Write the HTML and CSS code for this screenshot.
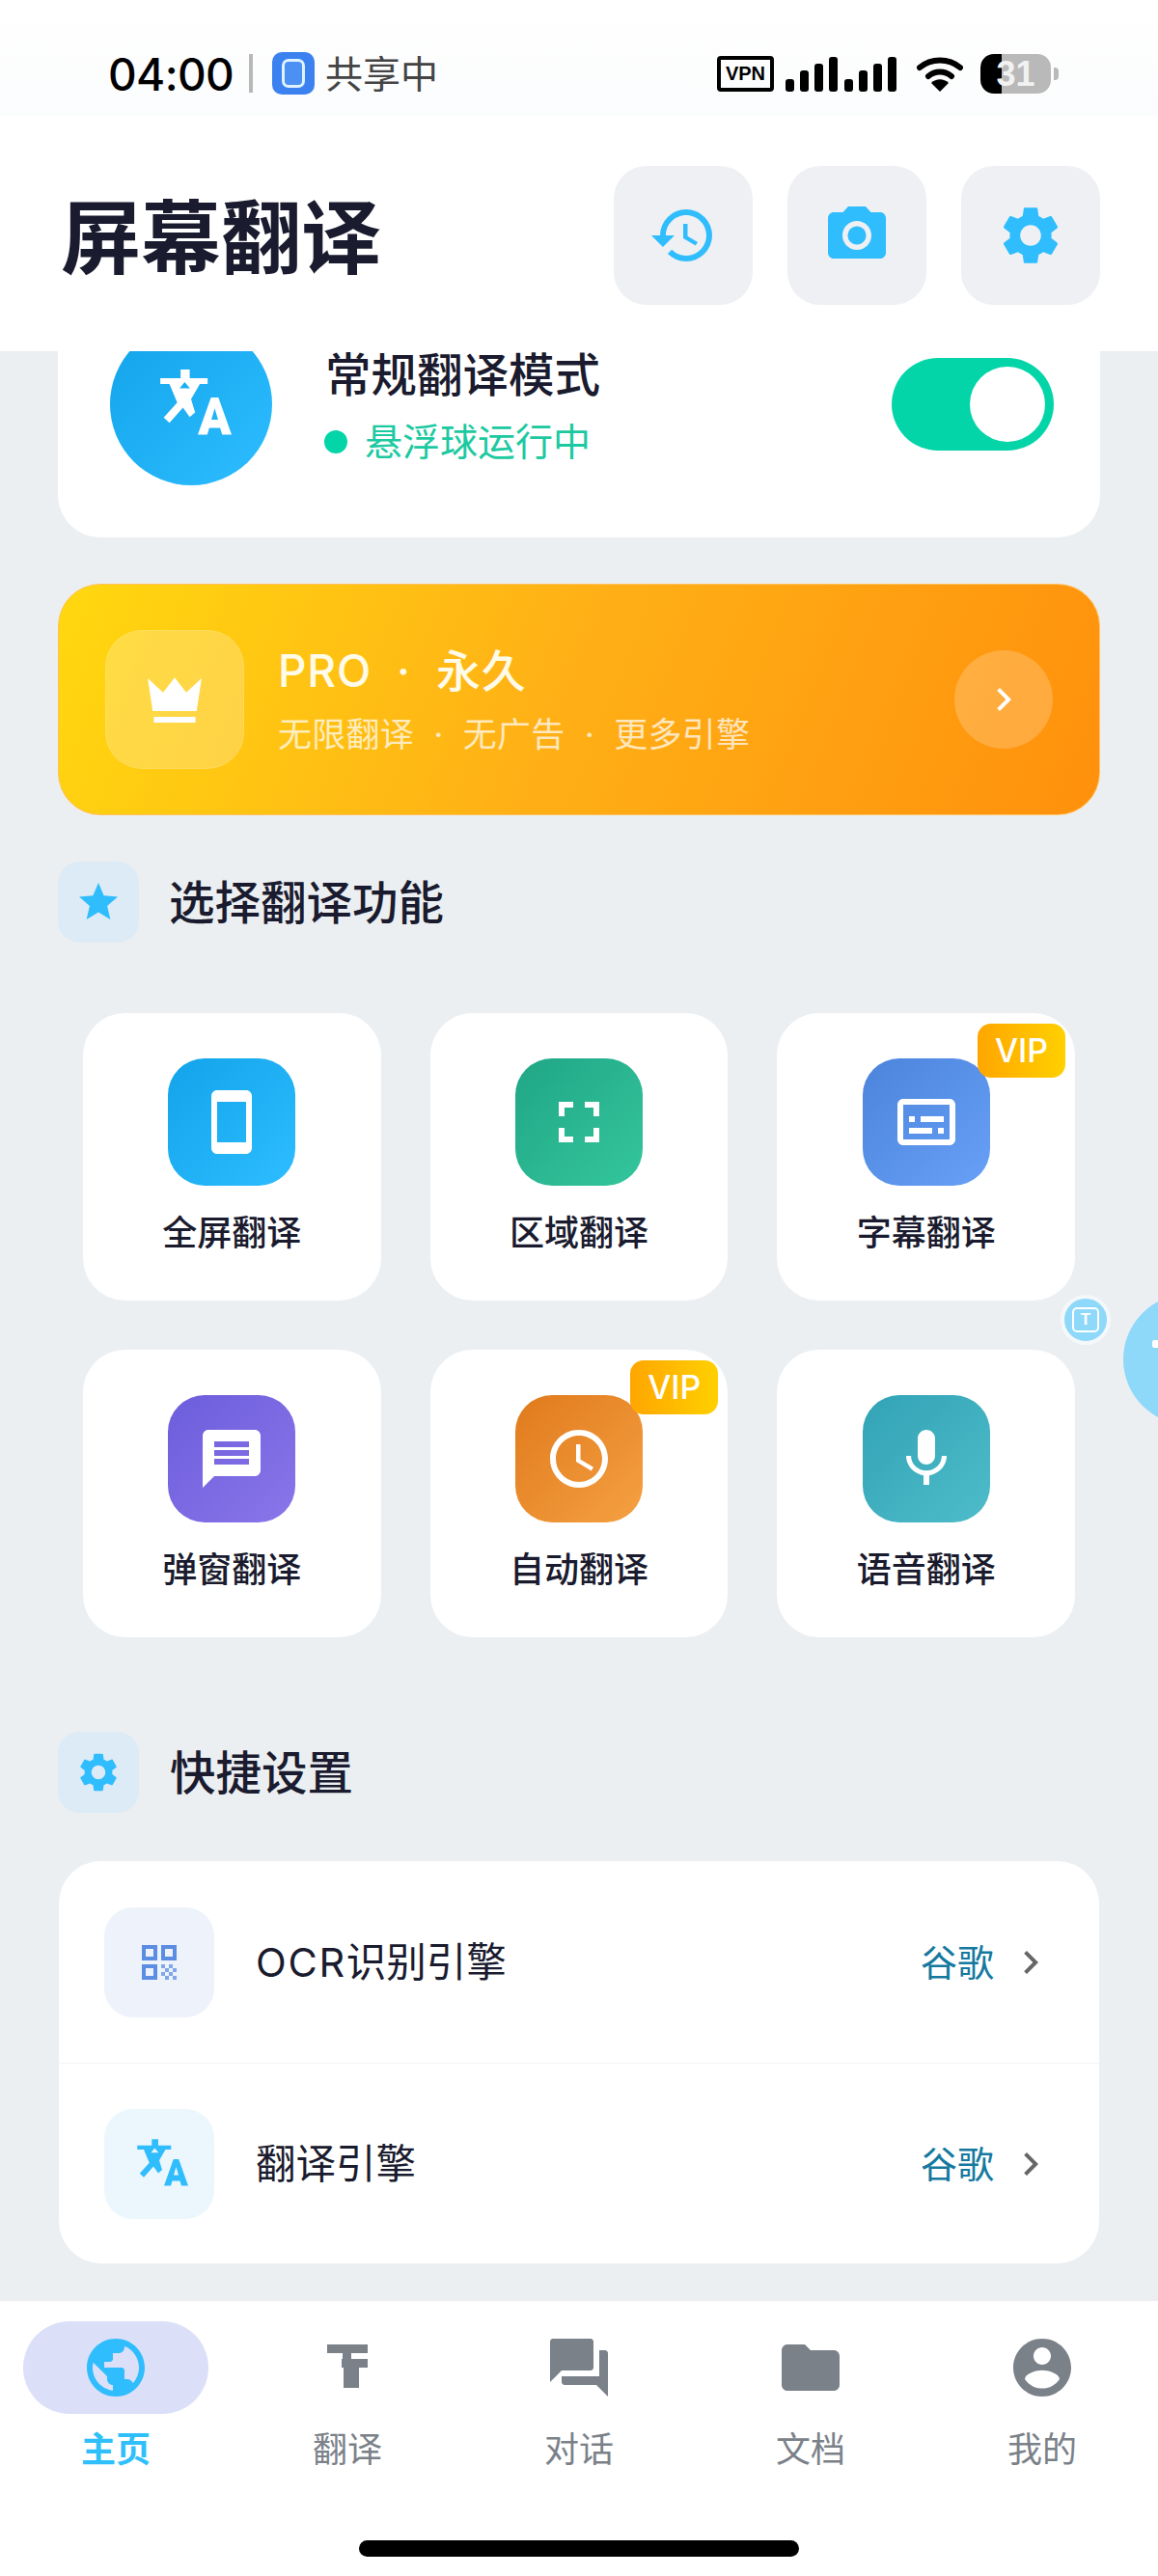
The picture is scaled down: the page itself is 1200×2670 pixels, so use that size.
FILE: index.html
```html
<!DOCTYPE html>
<html lang="zh-CN">
<head>
  <meta charset="UTF-8" />
  <meta name="viewport" content="width=device-width, initial-scale=1.0"/>
  <title>屏幕翻译</title>
  <link rel="stylesheet" href="styles.css">
</head>
<body>

  <!-- shared icons -->
  <svg class="sprite" aria-hidden="true">
    <symbol id="i-gear" viewBox="0 0 24 24">
      <path d="M19.14 12.94c.04-.3.06-.61.06-.94 0-.32-.02-.64-.07-.94l2.03-1.58c.18-.14.23-.41.12-.61l-1.92-3.32c-.12-.22-.37-.29-.59-.22l-2.39.96c-.5-.38-1.03-.7-1.62-.94l-.36-2.54c-.04-.24-.24-.41-.48-.41h-3.84c-.24 0-.43.17-.47.41l-.36 2.54c-.59.24-1.13.57-1.62.94l-2.39-.96c-.22-.08-.47 0-.59.22L2.74 8.87c-.12.21-.08.47.12.61l2.03 1.58c-.05.3-.09.63-.09.94s.02.64.07.94l-2.03 1.58c-.18.14-.23.41-.12.61l1.92 3.32c.12.22.37.29.59.22l2.39-.96c.5.38 1.03.7 1.62.94l.36 2.54c.05.24.24.41.48.41h3.84c.24 0 .44-.17.47-.41l.36-2.54c.59-.24 1.13-.56 1.62-.94l2.39.96c.22.08.47 0 .59-.22l1.92-3.32c.12-.22.07-.47-.12-.61l-2.01-1.58zM12 15.6c-1.98 0-3.6-1.62-3.6-3.6s1.62-3.6 3.6-3.6 3.6 1.62 3.6 3.6-1.62 3.6-3.6 3.6z"/>
    </symbol>
    <symbol id="i-translate" viewBox="0 0 24 24">
      <path fill-rule="evenodd" d="M8.9 1.7h2.7v2.6h5.3V6h-2.3L12 10.5l1.2 3.9-1.6 1.4-2-2.8-4 4.5-1.7-1.6 4-4.4L5.6 6H2.9V4.3h6zM10.1 5.4L8.6 7.3h3.1z"/>
      <path fill-rule="evenodd" d="M17.9 10h2.2L24 21h-2.8l-.6-2h-3.2l-.6 2H14zM19 13.2l-1 3.4h2z"/>
    </symbol>
    <symbol id="i-chevron" viewBox="0 0 24 24">
      <path d="M10 6L8.59 7.41 13.17 12l-4.58 4.59L10 18l6-6z"/>
    </symbol>
  </svg>

  <div class="phone">

    <div class="status">
      <span class="time">04:00</span>
      <span class="sep"></span>
      <span class="share-icon"><i></i></span>
      <span class="share-text">共享中</span>
      <span class="status-right">
        <span class="vpn">VPN</span>
        <svg class="signal" viewBox="0 0 115 36">
          <rect x="0" y="23" width="9" height="13" rx="3"/>
          <rect x="15" y="14" width="9" height="22" rx="3"/>
          <rect x="30" y="7" width="9" height="29" rx="3"/>
          <rect x="45" y="0" width="9" height="36" rx="3"/>
          <rect x="61" y="23" width="9" height="13" rx="3"/>
          <rect x="76" y="14" width="9" height="22" rx="3"/>
          <rect x="91" y="7" width="9" height="29" rx="3"/>
          <rect x="106" y="0" width="9" height="36" rx="3"/>
        </svg>
        <svg class="wifi" viewBox="0 0 48 36">
          <path class="wifi-arc" d="M3 11C15 1 33 1 45 11"/>
          <path class="wifi-arc" d="M12 20C19 14 29 14 36 20"/>
          <path d="M15 27C20 22 28 22 33 27L24 36z"/>
        </svg>
        <span class="battery">31</span>
        <span class="battery-nub"></span>
      </span>
    </div>

    <header class="top">
      <h1>屏幕翻译</h1>
      <div class="top-btns">
        <button class="top-btn">
          <svg viewBox="0 0 24 24"><path d="M13 3a9 9 0 0 0-9 9H1l3.89 3.89.07.14L9 12H6c0-3.87 3.13-7 7-7s7 3.13 7 7-3.13 7-7 7c-1.93 0-3.68-.79-4.94-2.06l-1.42 1.42A8.954 8.954 0 0 0 13 21a9 9 0 0 0 0-18zm-1 5v5l4.28 2.54.72-1.21-3.5-2.08V8H12z"/></svg>
        </button>
        <button class="top-btn">
          <svg viewBox="0 0 24 24"><circle cx="12" cy="12" r="3.2"/><path d="M9 2 7.17 4H4c-1.1 0-2 .9-2 2v12c0 1.1.9 2 2 2h16c1.1 0 2-.9 2-2V6c0-1.1-.9-2-2-2h-3.17L15 2H9zm3 15c-2.76 0-5-2.24-5-5s2.24-5 5-5 5 2.24 5 5-2.24 5-5 5z"/></svg>
        </button>
        <button class="top-btn">
          <svg viewBox="0 0 24 24"><use href="#i-gear"/></svg>
        </button>
      </div>
    </header>

    <main>
      <!-- list is scrolled a little, the header covers the top of this card -->
      <section class="mode-card">
        <div class="mode-icon"><svg viewBox="0 0 24 24"><use href="#i-translate"/></svg></div>
        <div class="mode-text">
          <div class="mode-title">常规翻译模式</div>
          <div class="mode-sub"><span class="dot"></span>悬浮球运行中</div>
        </div>
        <div class="toggle"><span class="knob"></span></div>
      </section>

      <section class="pro-card">
        <div class="crown">
          <svg viewBox="0 0 24 24"><path d="M2.7 4.7L8 9.6l4-5.2 4 5.2 5.3-4.9L19.6 16H4.4z"/><rect x="4.8" y="18" width="14.4" height="2"/></svg>
        </div>
        <div class="pro-text">
          <div class="pro-title">PRO &nbsp;·&nbsp; 永久</div>
          <div class="pro-sub">无限翻译 &nbsp;·&nbsp; 无广告 &nbsp;·&nbsp; 更多引擎</div>
        </div>
        <div class="pro-arrow"><svg viewBox="0 0 24 24"><use href="#i-chevron"/></svg></div>
      </section>

      <div class="sec-head">
        <span class="sec-icon"><svg viewBox="0 0 24 24"><path d="M12 17.27L18.18 21l-1.64-7.03L22 9.24l-7.19-.61L12 2 9.19 8.63 2 9.24l5.46 4.73L5.82 21z"/></svg></span>
        <h2>选择翻译功能</h2>
      </div>

      <div class="grid">
        <div class="tile">
          <div class="tile-icon c-blue"><svg viewBox="0 0 24 24"><path d="M17 1.01L7 1c-1.1 0-2 .9-2 2v18c0 1.1.9 2 2 2h10c1.1 0 2-.9 2-2V3c0-1.1-.9-1.99-2-1.99zM17 19H7V5h10v14z"/></svg></div>
          <div class="tile-name">全屏翻译</div>
        </div>
        <div class="tile">
          <div class="tile-icon c-green"><svg viewBox="0 0 24 24"><path d="M7 14H5v5h5v-2H7v-3zm-2-4h2V7h3V5H5v5zm12 7h-3v2h5v-5h-2v3zM14 5v2h3v3h2V5h-5z"/></svg></div>
          <div class="tile-name">区域翻译</div>
        </div>
        <div class="tile">
          <span class="vip">VIP</span>
          <div class="tile-icon c-azure"><svg viewBox="0 0 24 24"><path d="M20 4H4c-1.1 0-2 .9-2 2v12c0 1.1.9 2 2 2h16c1.1 0 2-.9 2-2V6c0-1.1-.9-2-2-2zm0 14H4V6h16v12zM6 10h2v2H6zm0 4h8v2H6zm10 0h2v2h-2zm-6-4h8v2h-8z"/></svg></div>
          <div class="tile-name">字幕翻译</div>
        </div>
        <div class="tile">
          <div class="tile-icon c-purple"><svg viewBox="0 0 24 24"><path d="M20 2H4c-1.1 0-1.99.9-1.99 2L2 22l4-4h14c1.1 0 2-.9 2-2V4c0-1.1-.9-2-2-2zm-2 12H6v-2h12v2zm0-3H6V9h12v2zm0-3H6V6h12v2z"/></svg></div>
          <div class="tile-name">弹窗翻译</div>
        </div>
        <div class="tile">
          <span class="vip">VIP</span>
          <div class="tile-icon c-orange"><svg viewBox="0 0 24 24"><path d="M11.99 2C6.47 2 2 6.48 2 12s4.47 10 9.99 10C17.52 22 22 17.52 22 12S17.52 2 11.99 2zM12 20c-4.42 0-8-3.58-8-8s3.58-8 8-8 8 3.58 8 8-3.58 8-8 8zm.5-13H11v6l5.25 3.15.75-1.23-4.5-2.67z"/></svg></div>
          <div class="tile-name">自动翻译</div>
        </div>
        <div class="tile">
          <div class="tile-icon c-teal"><svg viewBox="0 0 24 24"><path d="M12 14c1.66 0 2.99-1.34 2.99-3L15 5c0-1.66-1.34-3-3-3S9 3.34 9 5v6c0 1.66 1.34 3 3 3zm5.3-3c0 3-2.54 5.1-5.3 5.1S6.7 14 6.7 11H5c0 3.41 2.72 6.23 6 6.72V21h2v-3.28c3.28-.48 6-3.3 6-6.72h-1.7z"/></svg></div>
          <div class="tile-name">语音翻译</div>
        </div>
      </div>

      <div class="sec-head sec-head-2">
        <span class="sec-icon"><svg viewBox="0 0 24 24"><use href="#i-gear"/></svg></span>
        <h2>快捷设置</h2>
      </div>

      <section class="settings">
        <div class="row">
          <span class="row-icon row-icon-qr">
            <svg viewBox="0 0 24 24">
              <path d="M3 11h8V3H3v8zm2-6h4v4H5V5zM3 21h8v-8H3v8zm2-6h4v4H5v-4zM13 3v8h8V3h-8zm6 6h-4V5h4v4z"/>
              <path class="qr-dots" d="M13 13h2v2h-2zm4 0h2v2h-2zm-2 2h2v2h-2zm4 0h2v2h-2zm-6 2h2v2h-2zm4 0h2v2h-2zm-2 2h2v2h-2zm4 0h2v2h-2z"/>
            </svg>
          </span>
          <span class="row-name"><span class="ocr">OCR</span>识别引擎</span>
          <span class="row-value">谷歌</span>
          <svg class="row-chev" viewBox="0 0 24 24"><use href="#i-chevron"/></svg>
        </div>
        <div class="row">
          <span class="row-icon row-icon-tr"><svg viewBox="0 0 24 24"><use href="#i-translate"/></svg></span>
          <span class="row-name">翻译引擎</span>
          <span class="row-value">谷歌</span>
          <svg class="row-chev" viewBox="0 0 24 24"><use href="#i-chevron"/></svg>
        </div>
      </section>
    </main>

    <nav>
      <div class="tabs">
        <div class="tab active">
          <div class="tab-icon"><svg viewBox="0 0 24 24"><path d="M12 2C6.48 2 2 6.48 2 12s4.48 10 10 10 10-4.48 10-10S17.52 2 12 2zm-1 17.93c-3.95-.49-7-3.85-7-7.93 0-.62.08-1.21.21-1.79L9 15v1c0 1.1.9 2 2 2v1.93zm6.9-2.54c-.26-.81-1-1.39-1.9-1.39h-1v-3c0-.55-.45-1-1-1H8v-2h2c.55 0 1-.45 1-1V7h2c1.1 0 2-.9 2-2v-.41c2.93 1.19 5 4.06 5 7.41 0 2.08-.8 3.97-2.1 5.39z"/></svg></div>
          <div class="tab-name">主页</div>
        </div>
        <div class="tab">
          <div class="tab-icon"><svg viewBox="0 0 72 72"><path d="M15 12h42v9H15zM31 21h9v6h-9zM30 27h27v9H48v21H32V36h-2z"/></svg></div>
          <div class="tab-name">翻译</div>
        </div>
        <div class="tab">
          <div class="tab-icon"><svg viewBox="0 0 24 24"><path d="M21 6h-2v9H6v2c0 .55.45 1 1 1h11l4 4V7c0-.55-.45-1-1-1zm-4 6V3c0-.55-.45-1-1-1H3c-.55 0-1 .45-1 1v14l4-4h10c.55 0 1-.45 1-1z"/></svg></div>
          <div class="tab-name">对话</div>
        </div>
        <div class="tab">
          <div class="tab-icon"><svg viewBox="0 0 24 24"><path d="M10 4H4c-1.1 0-1.99.9-1.99 2L2 18c0 1.1.9 2 2 2h16c1.1 0 2-.9 2-2V8c0-1.1-.9-2-2-2h-8l-2-2z"/></svg></div>
          <div class="tab-name">文档</div>
        </div>
        <div class="tab">
          <div class="tab-icon"><svg viewBox="0 0 24 24"><path d="M12 2C6.48 2 2 6.48 2 12s4.48 10 10 10 10-4.48 10-10S17.52 2 12 2zm0 3c1.66 0 3 1.34 3 3s-1.34 3-3 3-3-1.34-3-3 1.34-3 3-3zm0 14.2c-2.5 0-4.71-1.28-6-3.22.03-1.99 4-3.08 6-3.08 1.99 0 5.97 1.09 6 3.08-1.29 1.94-3.5 3.22-6 3.22z"/></svg></div>
          <div class="tab-name">我的</div>
        </div>
      </div>
      <div class="home-bar"></div>
    </nav>

    <!-- floating ball over the page -->
    <div class="float-t"><span>T</span></div>
    <div class="float-ball"><i></i></div>
  </div>

</body>
</html>
```

FILE: styles.css
```css
* {
  box-sizing: border-box;
}

html, body {
  margin: 0;
  background: #eceff2;
}

body {
  font-family: Inter, "Noto Sans CJK SC", sans-serif;
  color: #1a1b2e;
}

.sprite {
  display: none;
}

.phone {
  position: relative;
  width: 1200px;
  height: 2670px;
  display: flex;
  flex-direction: column;
  overflow: hidden;
}

/* status bar */
.status {
  height: 120px;
  flex: none;
  display: flex;
  align-items: flex-start;
  padding: 54px 0 0 112px;
  background: linear-gradient(to bottom, #fff 0, #fbfcfd 100%);
}

.time {
  margin-top: 1px;
  font-size: 46px;
  line-height: 44px;
  font-weight: 500;
  color: #000;
  width: 146px;
  letter-spacing: -0.6px;
}

.sep {
  width: 4px;
  height: 40px;
  margin-top: 2px;
  background: #b8b8b8;
}

.share-icon {
  width: 44px;
  height: 44px;
  margin-left: 20px;
  border-radius: 10px;
  background: #3b82f0;
  display: flex;
  align-items: center;
  justify-content: center;
}

.share-icon i {
  width: 24px;
  height: 30px;
  border: 3px solid #dff3ff;
  border-radius: 7px;
  background: #4d90f3;
}

.share-text {
  margin: 1px 0 0 11px;
  font-size: 39px;
  line-height: 44px;
  color: #444;
}

.status-right {
  margin-left: auto;
  display: flex;
  align-items: flex-start;
  padding-right: 103px;
}

.vpn {
  width: 59px;
  height: 37px;
  margin-top: 4px;
  border: 4px solid #000;
  border-radius: 4px;
  font: bold 20px/29px "Liberation Sans", sans-serif;
  text-align: center;
  color: #000;
}

.signal {
  width: 115px;
  height: 36px;
  margin: 5px 0 0 12px;
}

.wifi {
  width: 48px;
  height: 36px;
  margin: 5px 0 0 21px;
}

.wifi-arc {
  fill: none;
  stroke: #000;
  stroke-width: 6;
  stroke-linecap: round;
}

.battery {
  width: 73px;
  height: 41px;
  margin: 2px 0 0 18px;
  border-radius: 14px;
  background: linear-gradient(to right, #000 30%, #b9b9b9 30%);
  font: bold 36px/41px "Liberation Sans", sans-serif;
  color: #f2f2f2;
  text-align: center;
}

.battery-nub {
  width: 5px;
  height: 13px;
  margin: 16px 0 0 3px;
  border-radius: 0 4px 4px 0;
  background: #b9b9b9;
}

/* title bar */
.top {
  height: 244px;
  flex: none;
  position: relative;
  z-index: 2;
  display: flex;
  align-items: flex-start;
  justify-content: space-between;
  padding: 52px 60px 0 63px;
  background: #fff;
}

h1 {
  margin: 0;
  padding-top: 27px;
  font-size: 83px;
  line-height: 96px;
  font-weight: 700;
}

.top-btns {
  display: flex;
  gap: 36px;
}

.top-btn {
  width: 144px;
  height: 144px;
  padding: 0;
  border: 0;
  border-radius: 34px;
  background: #eef0f3;
  display: flex;
  align-items: center;
  justify-content: center;
}

.top-btn svg {
  width: 72px;
  height: 72px;
  fill: #2fbdfd;
}

/* scrolled content */
main {
  flex: 1;
  min-height: 0;
  padding: 0 60px;
  background: #eceff2;
}

.mode-card {
  margin-top: -77px;
  height: 270px;
  display: flex;
  align-items: flex-start;
  padding: 48px 48px 0 54px;
  border-radius: 44px;
  background: #fff;
}

.mode-icon {
  width: 168px;
  height: 168px;
  flex: none;
  border-radius: 50%;
  background: linear-gradient(135deg, #12a3ea, #2dbdff);
  display: flex;
  align-items: center;
  justify-content: center;
}

.mode-icon svg {
  width: 84px;
  height: 84px;
  fill: #fff;
}

.mode-text {
  margin-left: 54px;
  flex: 1;
  padding-top: 30px;
}

.mode-title {
  margin-left: 1px;
  font-size: 47.5px;
  line-height: 48px;
  font-weight: 500;
}

.mode-sub {
  margin-top: 25px;
  display: flex;
  align-items: center;
  font-size: 39px;
  line-height: 40px;
  color: #1cc9a0;
}

.dot {
  width: 24px;
  height: 24px;
  margin-right: 18px;
  border-radius: 50%;
  background: #03d5a9;
}

.toggle {
  width: 168px;
  height: 96px;
  margin-top: 36px;
  padding: 9px;
  border-radius: 48px;
  background: #03d5a9;
  display: flex;
  justify-content: flex-end;
}

.knob {
  width: 78px;
  height: 78px;
  border-radius: 50%;
  background: #fff;
}

.pro-card {
  margin-top: 48px;
  height: 240px;
  display: flex;
  align-items: center;
  padding: 0 48px;
  border: 1px solid #ffc25e;
  border-radius: 44px;
  background: linear-gradient(112deg, #ffd80f 0%, #ffb016 48%, #ff900c 100%);
  color: #fff;
}

.crown {
  width: 144px;
  height: 144px;
  flex: none;
  border: 1px solid rgba(255, 255, 255, 0.12);
  border-radius: 38px;
  background: rgba(255, 255, 255, 0.22);
  display: flex;
  align-items: center;
  justify-content: center;
}

.crown svg {
  width: 72px;
  height: 72px;
  fill: #fff;
}

.pro-text {
  margin-left: 35px;
  flex: 1;
}

.pro-title {
  font-size: 46px;
  line-height: 56px;
  font-weight: 500;
  letter-spacing: 0.8px;
  color: #fffbe8;
}

.pro-sub {
  margin-top: 16px;
  font-size: 35px;
  line-height: 44px;
  letter-spacing: 0.25px;
  color: rgba(255, 255, 255, 0.72);
}

.pro-arrow {
  width: 102px;
  height: 102px;
  border-radius: 50%;
  background: rgba(255, 255, 255, 0.2);
  display: flex;
  align-items: center;
  justify-content: center;
}

.pro-arrow svg {
  width: 48px;
  height: 48px;
  fill: #fff;
}

/* section headings */
.sec-head {
  margin-top: 48px;
  display: flex;
  align-items: center;
  gap: 31px;
}

.sec-head-2 {
  margin-top: 98px;
  gap: 32px;
}

.sec-icon {
  width: 84px;
  height: 84px;
  border-radius: 22px;
  background: #dcebf5;
  display: flex;
  align-items: center;
  justify-content: center;
}

.sec-icon svg {
  width: 48px;
  height: 48px;
  fill: #2fbdfd;
}

h2 {
  margin: 2px 0 0;
  font-size: 47.5px;
  line-height: 60px;
  font-weight: 500;
}

/* feature tiles */
.grid {
  margin-top: 73px;
  padding: 0 26px;
  display: grid;
  grid-template-columns: repeat(3, 1fr);
  gap: 51px;
}

.tile {
  position: relative;
  height: 298px;
  padding-top: 47px;
  border-radius: 44px;
  background: #fff;
  display: flex;
  flex-direction: column;
  align-items: center;
}

.tile-icon {
  width: 132px;
  height: 132px;
  border-radius: 38px;
  display: flex;
  align-items: center;
  justify-content: center;
}

.tile-icon svg {
  width: 72px;
  height: 72px;
  fill: #fff;
}

.c-blue   { background: linear-gradient(135deg, #12a3ea, #2dbdff); }
.c-green  { background: linear-gradient(135deg, #20a686, #34c69c); }
.c-azure  { background: linear-gradient(135deg, #4c84dc, #67a0f6); }
.c-purple { background: linear-gradient(135deg, #6c5ddb, #8a76ea); }
.c-orange { background: linear-gradient(135deg, #e07a1c, #f5a143); }
.c-teal   { background: linear-gradient(135deg, #32a3b6, #4ebcc9); }

.tile-name {
  margin-top: 27px;
  font-size: 36px;
  line-height: 44px;
  font-weight: 500;
}

.vip {
  position: absolute;
  top: 11px;
  right: 10px;
  width: 91px;
  height: 56px;
  border-radius: 14px;
  background: linear-gradient(to right, #ffa600, #ffd000);
  font-size: 34px;
  line-height: 56px;
  font-weight: 500;
  text-align: center;
  color: #fff;
}

/* quick settings */
.settings {
  margin: 50px 1px 0;
  border-radius: 44px;
  background: #fff;
}

.row {
  height: 209px;
  display: flex;
  align-items: center;
  padding: 0 47px;
}

.row + .row {
  height: 208px;
  border-top: 1px solid #f3f4f6;
}

.row-icon {
  width: 114px;
  height: 114px;
  border-radius: 30px;
  display: flex;
  align-items: center;
  justify-content: center;
}

.row-icon svg {
  width: 48px;
  height: 48px;
}

.row-icon-qr {
  background: #eef2fb;
  fill: #5b8de2;
}

.qr-dots {
  opacity: 0.75;
}

.row-icon-tr {
  background: #ecf7fd;
  fill: #2fbdfd;
}

.row-icon-tr svg {
  width: 60px;
  height: 60px;
}

.row-name {
  margin-left: 43px;
  flex: 1;
  font-size: 41.5px;
  line-height: 56px;
}

.ocr {
  letter-spacing: 1.7px;
}

.row-value {
  font-size: 38px;
  line-height: 50px;
  color: #15799f;
}

.row-chev {
  width: 48px;
  height: 48px;
  margin-left: 14px;
  fill: #666;
}

/* bottom tabs */
nav {
  height: 285px;
  flex: none;
  padding-top: 21px;
  background: #fff;
}

.tabs {
  display: grid;
  grid-template-columns: repeat(5, 1fr);
}

.tab {
  display: flex;
  flex-direction: column;
  align-items: center;
  fill: #7b8189;
  color: #7b8189;
}

.tab-icon {
  width: 192px;
  height: 96px;
  border-radius: 48px;
  display: flex;
  align-items: center;
  justify-content: center;
}

.tab-icon svg {
  width: 72px;
  height: 72px;
}

.tab-name {
  margin-top: 17px;
  font-size: 36px;
  line-height: 40px;
}

.tab.active {
  fill: #2fbdfd;
  color: #2fc0fb;
}

.tab.active .tab-icon {
  background: #dbe0f8;
}

.tab.active .tab-name {
  font-weight: 700;
}

.home-bar {
  width: 456px;
  height: 17px;
  margin: 74px auto 0;
  border-radius: 9px;
  background: #000;
}

/* floating ball */
.float-t {
  position: absolute;
  left: 1099px;
  top: 1342px;
  width: 52px;
  height: 52px;
  border: 4px solid #f4f8fb;
  border-radius: 50%;
  background: #8ed8f9;
  display: flex;
  align-items: center;
  justify-content: center;
}

.float-t span {
  width: 28px;
  height: 26px;
  border: 2px solid #fff;
  border-radius: 5px;
  font: bold 17px/22px "Liberation Sans", sans-serif;
  text-align: center;
  color: #fff;
}

.float-ball {
  position: absolute;
  left: 1164px;
  top: 1341px;
  width: 136px;
  height: 136px;
  border-radius: 50%;
  background: #8ed8f9;
}

.float-ball i {
  position: absolute;
  left: 30px;
  top: 48px;
  width: 8px;
  height: 8px;
  border-radius: 2px;
  background: #fff;
}
```
